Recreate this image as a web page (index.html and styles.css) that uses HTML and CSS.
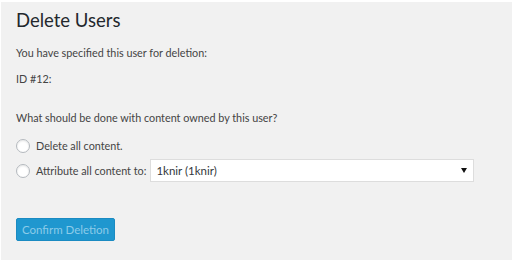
FILE: index.html
```html
<!DOCTYPE html>
<html>
<head>
<meta charset="utf-8">
<link rel="stylesheet" href="styles.css">
</head>
<body>
<div class="wrap">
  <h1 class="title">Delete Users</h1>
  <p class="line first">You have specified this user for deletion:</p>
  <p class="line id">ID #12:</p>
  <p class="line question">What should be done with content owned by this user?</p>
  <div class="options">
    <label class="opt"><span class="radio"></span><span>Delete all content.</span></label>
    <label class="opt"><span class="radio"></span><span>Attribute all content to:</span>
      <span class="select"><span class="sel-text">1knir (1knir)</span><span class="arrow"></span></span>
    </label>
  </div>
  <div class="actions"><span class="btn">Confirm Deletion</span></div>
</div>
</body>
</html>
```
FILE: styles.css
```css
html, body { margin: 0; padding: 0; }
body {
  background: #f1f1f1;
  width: 512px;
  height: 260px;
  overflow: hidden;
  border-top: 2px solid #fff;
  border-left: 1px solid #fff;
  box-sizing: border-box;
  font-family: Lato, "Liberation Sans", sans-serif;
  color: #444;
  font-size: 10.8px;
}
.wrap { padding: 6px 0 0 15px; }
.title {
  margin: 0;
  font-weight: 400;
  font-size: 18.5px;
  line-height: 24px;
  color: #23282d;
}
.line { margin: 0; line-height: 16px; }
.first { margin-top: 13px; }
.id { margin-top: 10px; }
.question { margin-top: 23px; }
.options { margin-top: 8px; display: flex; flex-direction: column; gap: 2px; }
.opt { display: flex; align-items: center; height: 23px; }
.radio {
  width: 14px; height: 14px; border-radius: 50%;
  border: 1px solid #b4b9be; background: #fff;
  box-shadow: inset 0 1px 2px rgba(0,0,0,.1);
  box-sizing: border-box; margin-right: 6px; flex: none;
}
.select {
  margin-left: 4px;
  width: 324px; height: 23px; box-sizing: border-box;
  border: 1px solid #ddd; background: #fff;
  display: flex; align-items: center; justify-content: space-between;
  padding: 0 6px 0 5px;
  color: #32373c;
  font-size: 11.5px;
}
.arrow {
  width: 0; height: 0;
  border-left: 3px solid transparent;
  border-right: 3px solid transparent;
  border-top: 5px solid #111;
}
.actions { margin-top: 36px; }
.btn {
  display: inline-flex; align-items: center; justify-content: center;
  width: 99px; height: 23px; box-sizing: border-box;
  background: #1f97cf; border: 1px solid #1b8bc2;
  border-radius: 2px; color: #8ccbe9; font-size: 11.5px;
}
```
